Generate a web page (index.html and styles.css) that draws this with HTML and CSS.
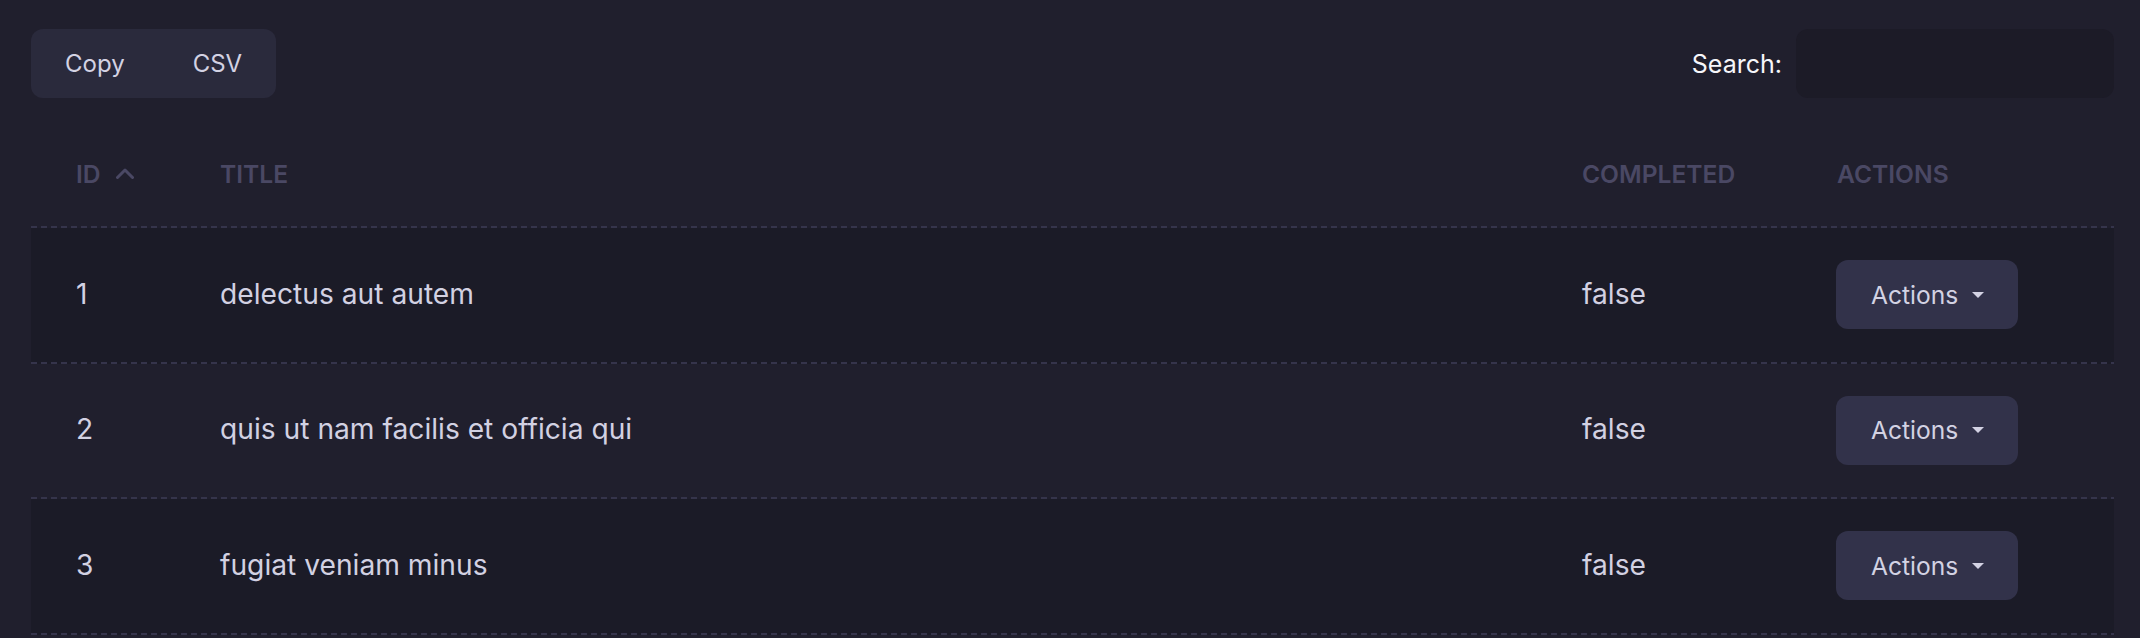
FILE: index.html
```html
<!DOCTYPE html>
<html lang="en">
<head>
<meta charset="utf-8">
<title>Todos</title>
<link rel="stylesheet" href="styles.css">
</head>
<body>
<div class="wrap">
  <div class="toolbar">
    <div class="btn-group">
      <button class="btn" type="button">Copy</button>
      <button class="btn" type="button">CSV</button>
    </div>
    <label class="search">Search:<input class="search-input" type="search"></label>
  </div>
  <table class="dt">
    <colgroup>
      <col class="c-id"><col class="c-title"><col class="c-done"><col class="c-act">
    </colgroup>
    <thead>
      <tr>
        <th><span class="sort">ID<svg class="chev" width="18" height="11" viewBox="0 0 18 11"><path d="M1.5 9.5 L9 2 L16.5 9.5" fill="none" stroke="currentColor" stroke-width="3" stroke-linecap="round" stroke-linejoin="round"/></svg></span></th>
        <th>Title</th>
        <th>Completed</th>
        <th>Actions</th>
      </tr>
    </thead>
    <tbody>
      <tr class="odd">
        <td>1</td><td>delectus aut autem</td><td>false</td>
        <td class="cell-act"><button class="act" type="button">Actions<span class="caret"></span></button></td>
      </tr>
      <tr>
        <td>2</td><td>quis ut nam facilis et officia qui</td><td>false</td>
        <td class="cell-act"><button class="act" type="button">Actions<span class="caret"></span></button></td>
      </tr>
      <tr class="odd">
        <td>3</td><td>fugiat veniam minus</td><td>false</td>
        <td class="cell-act"><button class="act" type="button">Actions<span class="caret"></span></button></td>
      </tr>
    </tbody>
  </table>
</div>
</body>
</html>
```
FILE: styles.css
```css
* { box-sizing: border-box; }
html, body {
  margin: 0;
  background: #201f2d;
  font-family: Inter, "Noto Sans", sans-serif;
  font-size: 24px;
  color: #d2d1e2;
}
.wrap {
  padding: 29px 26px 0 31px;
}
.toolbar {
  display: flex;
  justify-content: space-between;
  align-items: center;
}
.btn-group {
  display: flex;
  background: #2a2a3c;
  border-radius: 12px;
  height: 69px;
}
.btn {
  background: transparent;
  border: 0;
  font: inherit;
  color: #d3d2e3;
  padding: 0 34px;
  height: 69px;
}
.search {
  display: flex;
  align-items: center;
  gap: 14px;
  font-size: 25px;
  color: #f6f6fa;
}
.search-input {
  width: 318px;
  height: 69px;
  background: #1c1b27;
  border: 0;
  border-radius: 12px;
  outline: none;
}
.dt {
  width: 100%;
  margin-top: 24px;
  border-collapse: collapse;
  table-layout: fixed;
}
.c-id { width: 144px; }
.c-done { width: 255px; }
.c-act { width: 322px; }
.dt tr {
  background-image: repeating-linear-gradient(90deg, #35344b 0 6px, transparent 6px 10px);
  background-repeat: no-repeat;
  background-position: left bottom;
  background-size: 100% 2px;
}
.dt thead tr { height: 106px; }
.dt tbody tr { height: 135.5px; }
.dt tr.odd { background-color: #1b1b27; }
.dt th, .dt td {
  padding: 0 0 2px 45px;
  text-align: left;
  vertical-align: middle;
  line-height: 34px;
}
.dt td { font-size: 28.2px; padding-bottom: 4px; }
.dt td.cell-act { padding-bottom: 2px; }
.dt th {
  font-size: 24.6px;
  text-transform: uppercase;
  font-weight: 600;
  color: #4a4864;
}
.sort {
  display: inline-flex;
  align-items: center;
  gap: 15px;
}
.chev { display: block; margin-top: -2px; }
.act {
  display: inline-flex;
  align-items: center;
  gap: 14px;
  height: 69px;
  padding: 0 34px 0 35px;
  margin-left: -1px;
  background: #32324a;
  border: 0;
  border-radius: 12px;
  font-family: inherit;
  font-size: 24.6px;
  color: #d3d2e3;
}
.caret {
  width: 0;
  height: 0;
  border-top: 6px solid #d3d2e3;
  border-left: 6.5px solid transparent;
  border-right: 6.5px solid transparent;
}
```
